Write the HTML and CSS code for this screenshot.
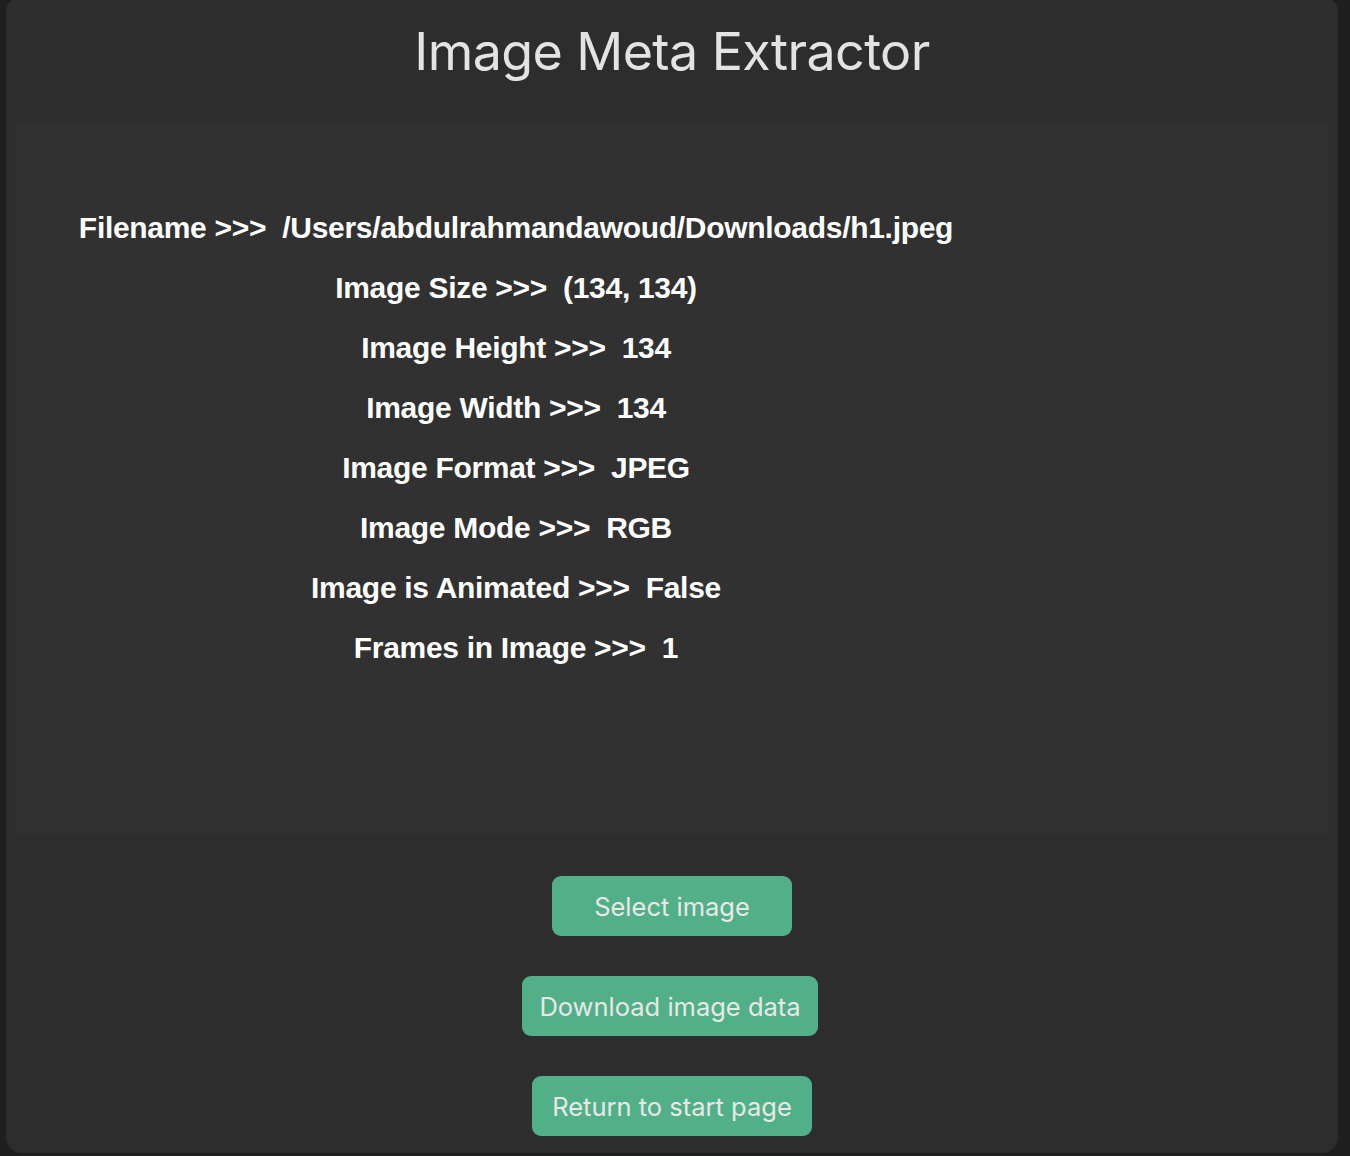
FILE: index.html
```html
<!DOCTYPE html>
<html lang="en">
<head>
<meta charset="utf-8">
<title>Image Meta Extractor</title>
<link rel="stylesheet" href="styles.css">
</head>
<body>
<div class="window">
  <h1 class="title">Image Meta Extractor</h1>
  <div class="panel">
    <div class="rows">
      <div class="row">Filename &gt;&gt;&gt;  /Users/abdulrahmandawoud/Downloads/h1.jpeg</div>
      <div class="row">Image Size &gt;&gt;&gt;  (134, 134)</div>
      <div class="row">Image Height &gt;&gt;&gt;  134</div>
      <div class="row">Image Width &gt;&gt;&gt;  134</div>
      <div class="row">Image Format &gt;&gt;&gt;  JPEG</div>
      <div class="row">Image Mode &gt;&gt;&gt;  RGB</div>
      <div class="row">Image is Animated &gt;&gt;&gt;  False</div>
      <div class="row">Frames in Image &gt;&gt;&gt;  1</div>
    </div>
  </div>
  <div class="actions">
    <button class="btn btn-select">Select image</button>
    <button class="btn btn-download">Download image data</button>
    <button class="btn btn-return">Return to start page</button>
  </div>
</div>
</body>
</html>
```

FILE: styles.css
```css
html, body {
  margin: 0;
  padding: 0;
  background: #1f1f1f;
  height: 1156px;
  overflow: hidden;
}

.window {
  margin: -4px 12px 0 6px;
  height: 1157px;
  background: #2d2d2d;
  border-radius: 16px;
  box-sizing: border-box;
  padding-top: 24px;
  display: flex;
  flex-direction: column;
}

.title {
  margin: 0 0 40px 0;
  font-family: Inter, "Noto Sans", sans-serif;
  font-weight: 400;
  font-size: 52px;
  line-height: 64px;
  color: #e3e3e3;
  text-align: center;
  letter-spacing: -0.6px;
}

.panel {
  margin: 0 10px;
  height: 711px;
  background: #313131;
  padding-top: 74px;
  box-sizing: border-box;
}

.rows {
  width: 1000px;
  display: flex;
  flex-direction: column;
}

.row {
  height: 60px;
  line-height: 60px;
  text-align: center;
  white-space: pre;
  font-family: "Liberation Sans", Arial, sans-serif;
  font-weight: 700;
  font-size: 30px;
  color: #ffffff;
  letter-spacing: -0.3px;
}

.actions {
  display: flex;
  flex-direction: column;
  align-items: center;
  gap: 40px;
  padding-top: 41px;
}

.btn {
  height: 60px;
  border: none;
  border-radius: 9px;
  background: #52b088;
  color: #e8e8e8;
  font-family: Inter, "Noto Sans", sans-serif;
  font-size: 25.5px;
  font-weight: 400;
  padding: 0;
  cursor: pointer;
}

.btn-select { width: 240px; }
.btn-download { width: 296px; margin-right: 4px; }
.btn-return { width: 280px; }
```
